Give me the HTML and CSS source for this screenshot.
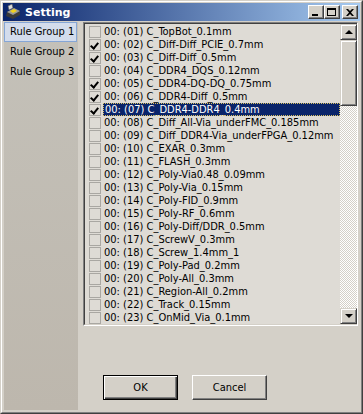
FILE: index.html
```html
<!DOCTYPE html>
<html lang="en">

<head>
    <meta charset="UTF-8">
    <title>Setting</title>
    <link rel="stylesheet" href="styles.css">
</head>

<body>
    <div class="window">
        <div class="frame">
            <div class="titlebar">
                <svg class="app-icon" width="16" height="16" viewBox="0 0 16 16">
                    <path d="M2 8 L9 4 L15 7 L15 11 L8 15 L1 12 Z" fill="#3a3a3a" />
                    <path d="M2 8 L9 4 L15 7 L8 11 Z" fill="#9a9a9a" />
                    <path d="M5 7 L9 5 L12 7 L8 9 Z" fill="#f2d21a" />
                    <path d="M3 2 L7 0 L8 4 L4 6 Z" fill="#dcdcdc" stroke="#555" stroke-width="0.6" />
                </svg>
                <span class="title">Setting</span>
                <div class="caption-btns">
                    <button class="cap min"><span></span></button>
                    <button class="cap max"><span></span></button>
                    <button class="cap close">
                        <svg width="8" height="7" viewBox="0 0 8 7">
                            <path d="M0 0h2l2 2 2-2h2L5 3.5 8 7H6L4 5 2 7H0l3-3.5z" fill="#000" />
                        </svg>
                    </button>
                </div>
            </div>

            <div class="content">
                <ul class="groups">
                    <li class="active">Rule Group 1</li>
                    <li>Rule Group 2</li>
                    <li>Rule Group 3</li>
                </ul>

                <div class="main">
                    <div class="listbox">
                        <ul class="rules">
                            <li><i class="cb"></i>00: (01) C_TopBot_0.1mm</li>
                            <li><i class="cb on"></i>00: (02) C_Diff-Diff_PCIE_0.7mm</li>
                            <li><i class="cb on"></i>00: (03) C_Diff-Diff_0.5mm</li>
                            <li><i class="cb"></i>00: (04) C_DDR4_DQS_0.12mm</li>
                            <li><i class="cb on"></i>00: (05) C_DDR4-DQ-DQ_0.75mm</li>
                            <li><i class="cb on"></i>00: (06) C_DDR4-Diff_0.5mm</li>
                            <li class="sel"><i class="cb on"></i><span>00: (07) C_DDR4-DDR4_0.4mm</span></li>
                            <li><i class="cb"></i>00: (08) C_Diff_All-Via_underFMC_0.185mm</li>
                            <li><i class="cb"></i>00: (09) C_Diff_DDR4-Via_underFPGA_0.12mm</li>
                            <li><i class="cb"></i>00: (10) C_EXAR_0.3mm</li>
                            <li><i class="cb"></i>00: (11) C_FLASH_0.3mm</li>
                            <li><i class="cb"></i>00: (12) C_Poly-Via0.48_0.09mm</li>
                            <li><i class="cb"></i>00: (13) C_Poly-Via_0.15mm</li>
                            <li><i class="cb"></i>00: (14) C_Poly-FID_0.9mm</li>
                            <li><i class="cb"></i>00: (15) C_Poly-RF_0.6mm</li>
                            <li><i class="cb"></i>00: (16) C_Poly-Diff/DDR_0.5mm</li>
                            <li><i class="cb"></i>00: (17) C_ScrewV_0.3mm</li>
                            <li><i class="cb"></i>00: (18) C_Screw_1.4mm_1</li>
                            <li><i class="cb"></i>00: (19) C_Poly-Pad_0.2mm</li>
                            <li><i class="cb"></i>00: (20) C_Poly-All_0.3mm</li>
                            <li><i class="cb"></i>00: (21) C_Region-All_0.2mm</li>
                            <li><i class="cb"></i>00: (22) C_Track_0.15mm</li>
                            <li><i class="cb"></i>00: (23) C_OnMid_Via_0.1mm</li>
                        </ul>
                        <div class="scrollbar">
                            <div class="sb-btn"><i class="arrow up"></i></div>
                            <div class="sb-track">
                                <div class="sb-thumb"></div>
                            </div>
                            <div class="sb-btn"><i class="arrow down"></i></div>
                        </div>
                    </div>

                    <div class="actions">
                        <button class="btn default">OK</button>
                        <button class="btn">Cancel</button>
                    </div>
                </div>
            </div>
        </div>
    </div>
</body>

</html>
```

FILE: styles.css
```css
* {
    box-sizing: border-box;
}

body {
    margin: 0;
    font-family: 'DejaVu Sans Condensed', 'Liberation Sans', sans-serif;
    font-size: 11px;
    color: #000;
}

ul {
    list-style: none;
    margin: 0;
    padding: 0;
}

/* 外框 */
.window {
    width: 363px;
    height: 414px;
    border: 1px solid;
    border-color: #d4d0c8 #404040 #404040 #d4d0c8;
    background: #d4d0c8;
}

.frame {
    height: 100%;
    border: 1px solid;
    border-color: #fff #808080 #808080 #fff;
    padding: 1px;
    display: flex;
    flex-direction: column;
}

/* 標題列 */
.titlebar {
    height: 18px;
    flex: none;
    display: flex;
    align-items: center;
    padding-left: 2px;
    background: linear-gradient(to right, #0a246a, #a6caf0);
}

.app-icon {
    flex: none;
}

.title {
    margin-left: 4px;
    color: #fff;
    font-weight: bold;
    font-size: 11px;
    font-family: 'DejaVu Sans', 'Liberation Sans', sans-serif;
}

.caption-btns {
    margin-left: auto;
    margin-right: 2px;
    display: flex;
}

.cap {
    width: 16px;
    height: 14px;
    padding: 0;
    border: 1px solid;
    border-color: #fff #404040 #404040 #fff;
    box-shadow: inset -1px -1px #808080;
    background: #d4d0c8;
    display: flex;
    align-items: center;
    justify-content: center;
}

.cap.close {
    margin-left: 2px;
}

.min span {
    width: 6px;
    height: 2px;
    background: #000;
    margin-top: 6px;
    margin-right: 2px;
}

.max span {
    width: 9px;
    height: 8px;
    border: 1px solid #000;
    border-top-width: 2px;
    margin-right: 1px;
}

.close svg {
    margin-right: 1px;
}

/* 內容 */
.content {
    flex: 1;
    display: flex;
    padding: 1px 0 0 1px;
}

.groups {
    width: 74px;
    height: 388px;
    background: linear-gradient(#c4c1b9, #bdb7ad);
    font-size: 11px;
}

.groups li {
    height: 20px;
    line-height: 18px;
    padding-left: 5px;
    border: 1px solid transparent;
    white-space: nowrap;
}

.groups li.active {
    width: 73px;
    border-color: #85a6d6;
    background: #d3dcec;
}

.main {
    margin-left: 5px;
    display: flex;
    flex-direction: column;
}

/* 清單 */
.listbox {
    width: 275px;
    height: 304px;
    border: 1px solid;
    border-color: #808080 #fff #fff #808080;
    display: flex;
}

.rules {
    flex: 1;
    padding-top: 1px;
    border: 1px solid;
    border-right: none;
    border-color: #404040 #d4d0c8 #d4d0c8 #404040;
    background: #dedbd5;
    overflow: hidden;
}

.rules li {
    height: 13px;
    line-height: 13px;
    padding-left: 1px;
    display: flex;
    align-items: center;
    white-space: nowrap;
}

.cb {
    width: 12px;
    height: 12px;
    margin: 0 3px;
    border: 1px solid #a9a7a2;
    flex: none;
    position: relative;
}

.cb.on::after {
    content: "";
    position: absolute;
    left: 2px;
    top: 1px;
    width: 3px;
    height: 6px;
    border: solid #000;
    border-width: 0 2px 2px 0;
    transform: rotate(40deg);
}

.rules li.sel span {
    flex: 1;
    margin-left: -1px;
    padding-left: 2px;
    height: 13px;
    background: #0a246a;
    color: #fff;
    outline: 1px dotted #d8c060;
    outline-offset: -1px;
}

/* 捲軸 */
.scrollbar {
    width: 17px;
    display: flex;
    flex-direction: column;
    border-top: 1px solid #404040;
    border-bottom: 1px solid #d4d0c8;
}

.sb-btn,
.sb-thumb {
    border: 1px solid;
    border-color: #d4d0c8 #404040 #404040 #d4d0c8;
    box-shadow: inset 1px 1px #fff, inset -1px -1px #808080;
    background: #d4d0c8;
}

.sb-btn {
    height: 16px;
    display: flex;
    align-items: center;
    justify-content: center;
}

.sb-track {
    flex: 1;
    background: repeating-conic-gradient(#fff 0 25%, #d4d0c8 0 50%) 0 0 / 2px 2px;
}

.sb-thumb {
    height: 66px;
}

.arrow {
    width: 0;
    height: 0;
    border-left: 4px solid transparent;
    border-right: 4px solid transparent;
}

.arrow.up {
    border-bottom: 4px solid #000;
}

.arrow.down {
    border-top: 4px solid #000;
}

/* 按鈕 */
.actions {
    margin-top: 49px;
    padding-left: 20px;
    display: flex;
    gap: 14px;
}

.btn {
    width: 75px;
    height: 25px;
    padding: 0;
    font: inherit;
    border: 1px solid;
    border-color: #fff #404040 #404040 #fff;
    box-shadow: inset -1px -1px #808080;
    background: #d4d0c8;
}

.btn.default {
    border: 1px solid #000;
    box-shadow: inset 1px 1px #fff, inset -1px -1px #404040, inset -2px -2px #808080;
}
```
